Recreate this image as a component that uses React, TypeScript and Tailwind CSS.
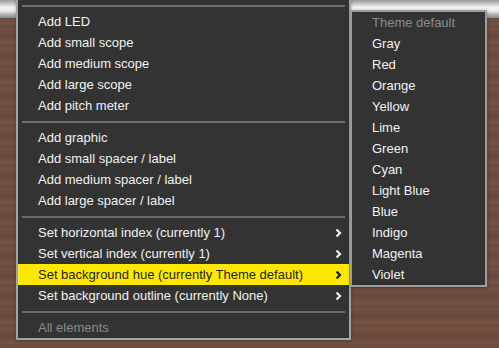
import React from 'react';

type Row =
  | { kind: 'sep' }
  | { kind: 'item'; label: string; sub?: boolean; active?: boolean; disabled?: boolean };

const mainRows: Row[] = [
  { kind: 'sep' },
  { kind: 'item', label: 'Add LED' },
  { kind: 'item', label: 'Add small scope' },
  { kind: 'item', label: 'Add medium scope' },
  { kind: 'item', label: 'Add large scope' },
  { kind: 'item', label: 'Add pitch meter' },
  { kind: 'sep' },
  { kind: 'item', label: 'Add graphic' },
  { kind: 'item', label: 'Add small spacer / label' },
  { kind: 'item', label: 'Add medium spacer / label' },
  { kind: 'item', label: 'Add large spacer / label' },
  { kind: 'sep' },
  { kind: 'item', label: 'Set horizontal index (currently 1)', sub: true },
  { kind: 'item', label: 'Set vertical index (currently 1)', sub: true },
  { kind: 'item', label: 'Set background hue (currently Theme default)', sub: true, active: true },
  { kind: 'item', label: 'Set background outline (currently None)', sub: true },
  { kind: 'sep' },
  { kind: 'item', label: 'All elements', disabled: true },
];

const hues = [
  'Gray', 'Red', 'Orange', 'Yellow', 'Lime', 'Green', 'Cyan',
  'Light Blue', 'Blue', 'Indigo', 'Magenta', 'Violet',
];

const Chevron: React.FC<{ dark?: boolean }> = ({ dark }) => (
  <svg width="7" height="10" viewBox="0 0 7 10" className="shrink-0">
    <path
      d="M1.5 1.5 L5 5 L1.5 8.5"
      fill="none"
      stroke={dark ? '#1a1a1a' : '#f2f2f2'}
      strokeWidth="2.2"
    />
  </svg>
);

const App: React.FC = () => {
  return (
    <div className="relative w-[499px] h-[348px] overflow-hidden font-['Liberation_Sans',Arial,sans-serif] text-[13px] bg-[repeating-linear-gradient(to_bottom,#6f4e40_0px,#755343_3px,#6a4a3d_6px,#71503f_9px,#6d4c3e_13px,#66473a_16px,#6f4e40_20px)]">
      {/* window strip behind the menus */}
      <div className="h-[18px] w-full bg-[linear-gradient(to_bottom,#9c9c9c_0px,#c9c9c9_4px,#f2f2f2_7px,#ececec_11px,#b8b8b8_14px,#8a8a8a_18px)]" />

      {/* main context menu */}
      <div className="absolute left-[16px] top-[-6px] w-[335px] border-2 border-[#a4a4a4] bg-[#333333] pt-[4px] shadow-[0_1px_3px_rgba(0,0,0,0.3)]">
        {mainRows.map((row, i) =>
          row.kind === 'sep' ? (
            <div key={i} className="h-[11px] flex items-center px-[4px]">
              <div className="h-[2px] w-full bg-[#6a6a6a]" />
            </div>
          ) : (
            <div
              key={i}
              className={`h-[21px] flex items-center justify-between pl-[20px] pr-[7px] ${
                row.active ? 'bg-[#ffe800] text-[#222222]' : row.disabled ? 'text-[#8a8a8a]' : 'text-[#f2f2f2]'
              }`}
            >
              <span className="whitespace-nowrap">{row.label}</span>
              {row.sub && <Chevron dark={row.active} />}
            </div>
          )
        )}
      </div>

      {/* hue submenu */}
      <div className="absolute left-[350px] top-[10px] w-[137px] border-2 border-[#9c9c9c] bg-[#333333] shadow-[0_1px_3px_rgba(0,0,0,0.3)]">
        <div className="h-[21px] flex items-center pl-[20px] text-[#8a8a8a] whitespace-nowrap">Theme default</div>
        {hues.map((h) => (
          <div key={h} className="h-[21px] flex items-center pl-[20px] text-[#f2f2f2] whitespace-nowrap">
            {h}
          </div>
        ))}
      </div>
    </div>
  );
};

export default App;
